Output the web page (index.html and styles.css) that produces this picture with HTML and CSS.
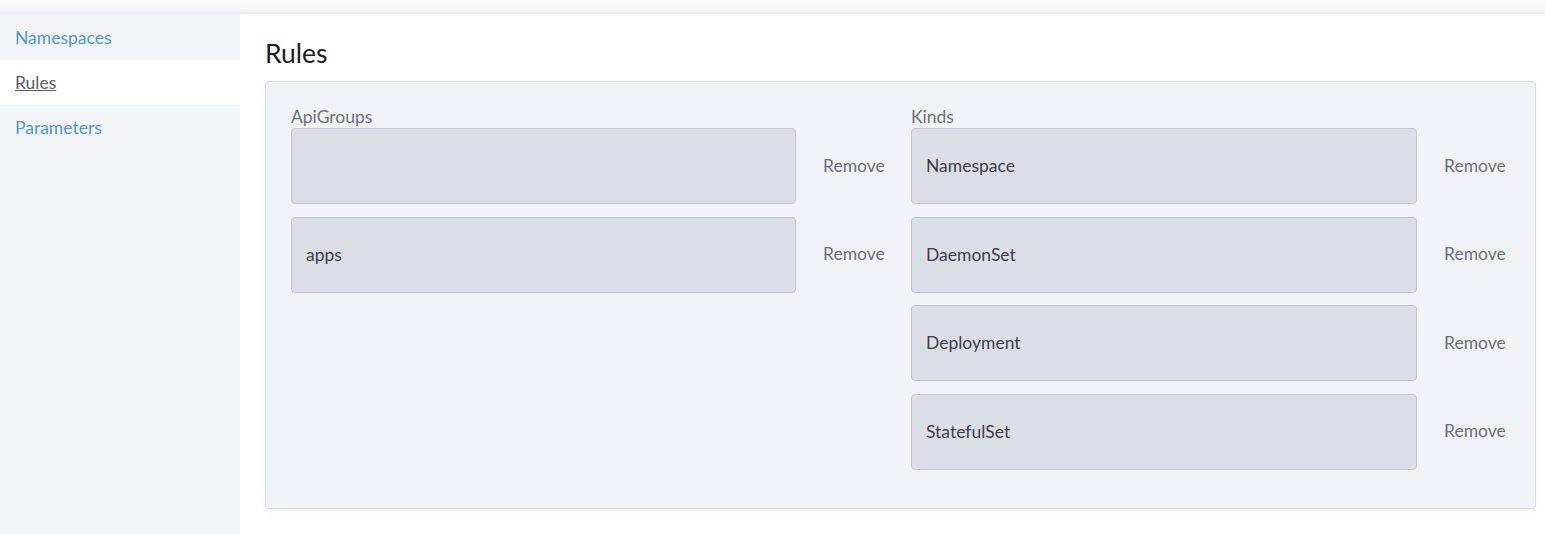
FILE: index.html
```html
<!DOCTYPE html>
<html>
<head>
<meta charset="utf-8">
<link rel="stylesheet" href="styles.css">
</head>
<body>
<div class="topbar"></div>
<div class="layout">
  <nav class="sidebar">
    <a class="nav-item" href="#">Namespaces</a>
    <a class="nav-item active" href="#">Rules</a>
    <a class="nav-item" href="#">Parameters</a>
  </nav>
  <main class="main">
    <h1 class="title">Rules</h1>
    <section class="card">
      <div class="column">
        <div class="label">ApiGroups</div>
        <div class="row"><div class="input"></div><button class="remove">Remove</button></div>
        <div class="row"><div class="input">apps</div><button class="remove">Remove</button></div>
      </div>
      <div class="column">
        <div class="label">Kinds</div>
        <div class="row"><div class="input">Namespace</div><button class="remove">Remove</button></div>
        <div class="row"><div class="input">DaemonSet</div><button class="remove">Remove</button></div>
        <div class="row"><div class="input">Deployment</div><button class="remove">Remove</button></div>
        <div class="row"><div class="input">StatefulSet</div><button class="remove">Remove</button></div>
      </div>
    </section>
  </main>
</div>
</body>
</html>
```
FILE: styles.css
```css
html, body {
  margin: 0;
  padding: 0;
  background: #ffffff;
  font-family: Lato, "Open Sans", "Liberation Sans", sans-serif;
  font-size: 17.5px;
  height: 100%;
  overflow: hidden;
}

.topbar {
  height: 14px;
  background: linear-gradient(to bottom, #fdfdfe 0%, #f7f7f9 55%, #eeeff3 100%);
}

.layout {
  display: flex;
  height: 520px;
}

.sidebar {
  width: 240px;
  flex: 0 0 240px;
  background: #f3f4f8;
  display: flex;
  flex-direction: column;
}

.nav-item {
  display: flex;
  align-items: center;
  height: 45px;
  padding: 0 15px;
  box-sizing: border-box;
  color: #4f98d4;
  text-decoration: none;
  font-size: 17.5px;
}

.nav-item:first-child {
  height: 46px;
}

.nav-item.active {
  background: #ffffff;
  color: #5b5d66;
  text-decoration: underline;
}

.main {
  flex: 1;
  padding: 23px 9px 0 25px;
  box-sizing: border-box;
}

.title {
  margin: 0 0 12px 0;
  font-size: 26.5px;
  font-weight: 400;
  line-height: 32px;
  color: #1d1e24;
}

.card {
  display: grid;
  grid-template-columns: 599px 1fr;
  column-gap: 21px;
  align-items: start;
  background: #f2f3f8;
  border: 1px solid #dadbe5;
  border-radius: 4px;
  box-shadow: 0 3px 10px rgba(40, 40, 80, 0.05);
  padding: 24px 24px 25px 25px;
}

.label {
  color: #6e7080;
  line-height: 21px;
  margin-bottom: 1px;
}

.row {
  display: flex;
  align-items: center;
  margin-bottom: 12.67px;
}

.input {
  flex: 1;
  height: 76px;
  box-sizing: border-box;
  background: #dcdee6;
  border: 1px solid #c3c5d6;
  border-radius: 4px;
  padding: 0 14px 1px;
  display: flex;
  align-items: center;
  color: #3c3e4c;
  font-size: 17.5px;
}

.remove {
  width: 94px;
  flex: 0 0 94px;
  background: none;
  border: none;
  padding: 0 0 2px 27px;
  text-align: left;
  font-family: inherit;
  font-size: 17.5px;
  color: #6d6f7e;
  cursor: pointer;
}
```
